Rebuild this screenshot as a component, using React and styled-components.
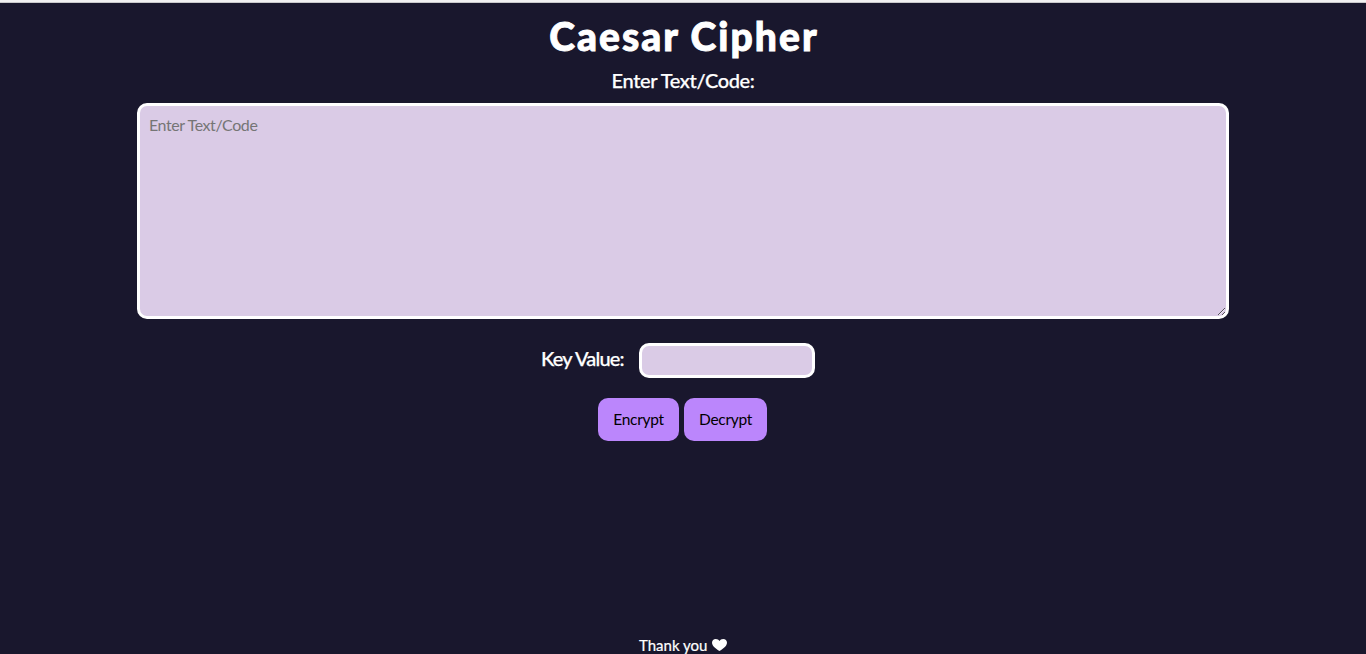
import React from "react";
import styled, { createGlobalStyle } from "styled-components";

const GlobalStyle = createGlobalStyle`
  * { box-sizing: border-box; }
  html, body { margin: 0; background: #19172d; }
  body, textarea, input, button {
    font-family: "Gill Sans", "Gill Sans MT", Lato, "Open Sans", sans-serif;
  }
`;

const Page = styled.main`
  height: 654px;
  overflow: hidden;
  display: flex;
  flex-direction: column;
  align-items: center;
  color: #fff;
  background: #19172d;
  border-top: 2px solid #f1f1f1;
  box-shadow: inset 0 1px #c9c9cb;
`;

const Title = styled.h1`
  margin: 10px 0 0 2px;
  font-size: 39px;
  line-height: 48px;
  font-weight: 900;
  letter-spacing: 2.05px;
  white-space: nowrap;
  -webkit-text-stroke: 0.9px #fff;
`;

const Label = styled.label`
  font-size: 20px;
  line-height: 24px;
  font-weight: 500;
  letter-spacing: ${(p) => p.$spacing || "0"};
  white-space: nowrap;
  -webkit-text-stroke: 0.25px #fff;
`;

const MessageLabel = styled(Label)`
  margin-top: 8px;
`;

const Message = styled.textarea`
  width: 1092px;
  height: 216px;
  margin: 11px 0 0;
  padding: 9px 9px;
  border: 3px solid #fff;
  border-radius: 10px;
  background: #dacbe6;
  font-size: 16px;
  line-height: 20px;
  letter-spacing: -0.42px;
  flex-shrink: 0;
  outline: 0;
  &::placeholder { color: #757575; }
`;

const KeyRow = styled.div`
  display: flex;
  margin: 24px 10px 0 0;
  gap: 15px;
  height: 35px;
`;

const KeyLabel = styled(Label)`
  width: 83px;
  margin-top: 3px;
`;

const KeyInput = styled.input`
  width: 176px;
  height: 35px;
  padding: 5px;
  border: 3px solid #fff;
  border-radius: 10px;
  background: #dacbe6;
  font-size: 16px;
  outline: 0;
`;

const Actions = styled.div`
  display: flex;
  gap: 5px;
  margin: 20px 1px 0 0;
`;

const Button = styled.button`
  width: ${(p) => p.$width};
  height: 43px;
  padding: 0 0 1px;
  border: 0;
  border-radius: 10px;
  background: #bb86fc;
  color: #000;
  font-size: 15.5px;
  line-height: 20px;
  letter-spacing: -0.3px;
`;

const Footer = styled.footer`
  display: flex;
  gap: 5px;
  margin-top: auto;
  height: 19px;
  font-size: 16px;
  line-height: 20px;
  white-space: nowrap;
`;

const Thanks = styled.span`
  width: 68px;
  font-size: 15px;
  -webkit-text-stroke: 0.2px #fff;
`;

const Heart = styled.svg`
  width: 15px;
  height: 12px;
  margin-top: 4px;
`;

export default function App() {
  return (
    <>
      <GlobalStyle />
      <Page>
        <Title>Caesar Cipher</Title>
        <MessageLabel htmlFor="message" $spacing="-0.38px">
          Enter Text/Code:
        </MessageLabel>
        <Message id="message" placeholder="Enter Text/Code" />
        <KeyRow>
          <KeyLabel htmlFor="key" $spacing="-0.8px">
            Key Value:
          </KeyLabel>
          <KeyInput id="key" type="number" />
        </KeyRow>
        <Actions>
          <Button $width="81px">Encrypt</Button>
          <Button $width="83px">Decrypt</Button>
        </Actions>
        <Footer>
          <Thanks>Thank you</Thanks>
          <Heart viewBox="0 0 15 12" aria-hidden="true">
            <path
              fill="#fff"
              d="M7.5 12C5.5 10.6 0 7.4 0 3.7C0 1.5 1.6 0 3.8 0C5.5 0 6.8.8 7.5 2.1C8.2.8 9.5 0 11.2 0C13.4 0 15 1.5 15 3.7C15 7.4 9.5 10.6 7.5 12Z"
            />
          </Heart>
        </Footer>
      </Page>
    </>
  );
}
